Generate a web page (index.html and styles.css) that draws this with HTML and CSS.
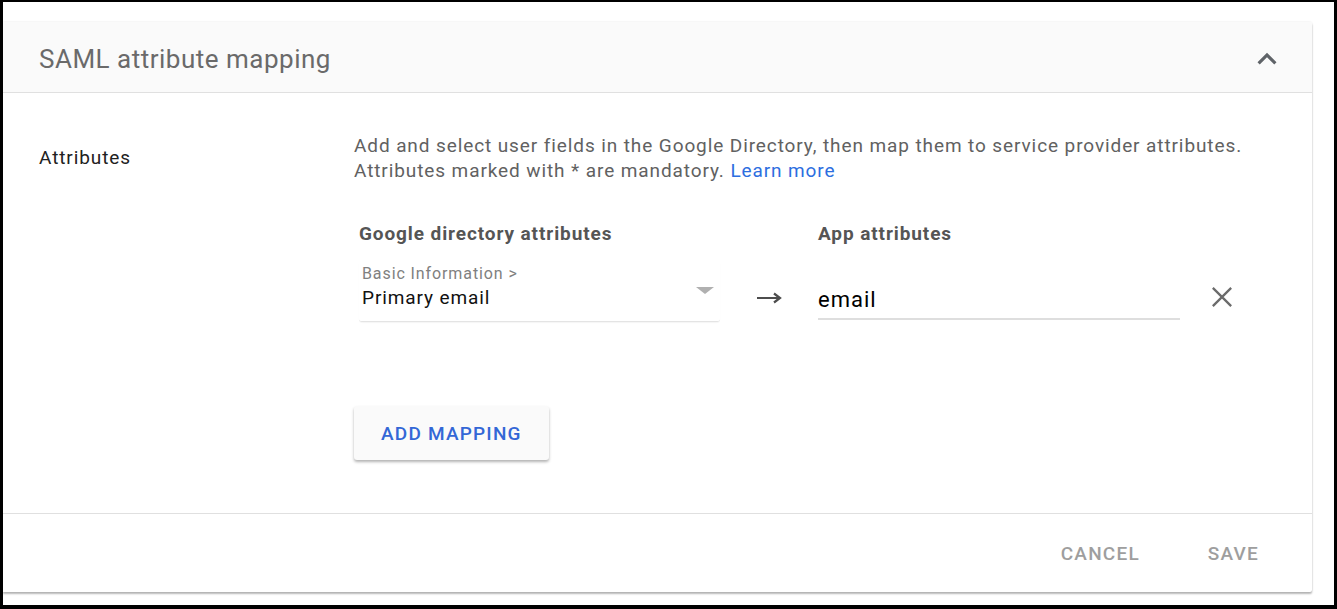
FILE: index.html
```html
<!DOCTYPE html>
<html lang="en">
<head>
  <meta charset="UTF-8" />
  <title>SAML attribute mapping</title>
  <link rel="stylesheet" href="styles.css">
</head>
<body>
  <div class="frame">
    <div class="card">
      <div class="card-header">
        <h2>SAML attribute mapping</h2>
        <svg class="chevron" width="38" height="38" viewBox="0 0 24 24">
          <path d="M7.41 15.41L12 10.83l4.59 4.58L18 14l-6-6-6 6z" fill="#5f6368"/>
        </svg>
      </div>

      <div class="card-body">
        <div class="label">Attributes</div>
        <div class="content">
          <p class="desc">
            Add and select user fields in the Google Directory, then map them to service provider attributes.<br>
            Attributes marked with * are mandatory. <a href="#">Learn more</a>
          </p>

          <div class="mapping">
            <div class="col-left">
              <div class="col-title">Google directory attributes</div>
              <div class="select">
                <div class="select-text">
                  <div class="crumb">Basic Information &gt;</div>
                  <div class="value">Primary email</div>
                </div>
                <span class="triangle"></span>
              </div>
            </div>

            <div class="arrow">
              <svg width="26" height="12" viewBox="0 0 26 12">
                <path d="M0 6h22M17 1.5L23 6l-6 4.5" stroke="#4d4d4d" stroke-width="2.2" fill="none"/>
              </svg>
            </div>

            <div class="col-right">
              <div class="col-title">App attributes</div>
              <div class="input">email</div>
            </div>

            <div class="remove">
              <svg width="22" height="22" viewBox="0 0 24 24">
                <path d="M2 2L22 22M22 2L2 22" stroke="#6b6b6b" stroke-width="2.5" fill="none"/>
              </svg>
            </div>
          </div>

          <button class="add-btn">ADD MAPPING</button>
        </div>
      </div>

      <div class="card-footer">
        <button class="flat">CANCEL</button>
        <button class="flat">SAVE</button>
      </div>
    </div>
  </div>
</body>
</html>
```

FILE: styles.css
```css
html, body {
  margin: 0;
  padding: 0;
}

body {
  font-family: Roboto, 'Liberation Sans', Arial, sans-serif;
  background: #000;
}

.frame {
  box-sizing: border-box;
  height: 609px;
  border-style: solid;
  border-color: #000;
  border-width: 2px 3px 4px 3px;
  background: #fff;
  padding: 20px 22px 0 0;
}

.card {
  background: #fff;
  border-radius: 0 2px 2px 0;
  box-shadow: 0 2px 2px rgba(0, 0, 0, 0.28), 0 0 2px rgba(0, 0, 0, 0.12);
}

.card-header {
  display: flex;
  align-items: center;
  justify-content: space-between;
  height: 71px;
  padding: 0 26px 0 36px;
  background: #fafafa;
  border-bottom: 1px solid #e0e0e0;
  box-sizing: border-box;
}

.card-header h2 {
  margin: 4px 0 0 0;
  font-size: 26px;
  font-weight: 400;
  letter-spacing: 0.5px;
  color: #6a6a6a;
}

.chevron {
  margin-top: 4px;
}

.card-body {
  display: flex;
  padding: 40px 0 53px 36px;
  border-bottom: 1px solid #e0e0e0;
}

.label {
  width: 315px;
  flex-shrink: 0;
  padding-top: 13px;
  font-size: 19px;
  letter-spacing: 0.9px;
  color: #212121;
}

.content {
  flex: 1;
}

.desc {
  margin: 0;
  font-size: 19px;
  letter-spacing: 0.9px;
  line-height: 25px;
  color: #616161;
}

.desc a {
  color: #2d6ee0;
  text-decoration: none;
}

.mapping {
  display: flex;
  align-items: flex-start;
  margin-top: 39px;
  padding-left: 5px;
}

.col-title {
  font-size: 19px;
  font-weight: 700;
  letter-spacing: 0.9px;
  color: #555;
  height: 30px;
}

.col-left {
  width: 361px;
}

.select {
  display: flex;
  justify-content: space-between;
  margin-top: 10px;
  padding: 0 6px 11px 3px;
  border-bottom: 1px solid #e4e4e4;
  border-radius: 0 0 3px 3px;
  box-shadow: 0 1px 1px rgba(0, 0, 0, 0.04);
}

.crumb {
  font-size: 16px;
  letter-spacing: 0.9px;
  color: #808080;
  line-height: 23px;
}

.value {
  font-size: 19px;
  letter-spacing: 0.9px;
  color: #111;
  line-height: 25px;
}

.triangle {
  align-self: flex-end;
  width: 0;
  height: 0;
  border-left: 9px solid transparent;
  border-right: 9px solid transparent;
  border-top: 7px solid #b0b0b0;
  margin-bottom: 16px;
}

.arrow {
  width: 98px;
  padding-top: 67px;
  padding-left: 37px;
  box-sizing: border-box;
}

.col-right {
  width: 362px;
}

.input {
  margin-top: 35px;
  padding-bottom: 6px;
  font-size: 22px;
  letter-spacing: 1px;
  color: #000;
  border-bottom: 2px solid #dedede;
}

.remove {
  padding: 64px 0 0 31px;
}

.add-btn {
  display: block;
  margin-top: 84px;
  padding: 0 27px;
  height: 54px;
  font-family: Roboto, 'Liberation Sans', Arial, sans-serif;
  font-size: 19px;
  font-weight: 500;
  letter-spacing: 1.2px;
  color: #3367d6;
  background: #fafafa;
  border: none;
  border-radius: 3px;
  box-shadow: 0 2px 3px rgba(0, 0, 0, 0.3);
  cursor: pointer;
}

.card-footer {
  display: flex;
  justify-content: flex-end;
  gap: 20px;
  height: 78px;
  align-items: center;
  padding-right: 29px;
}

.flat {
  font-family: Roboto, 'Liberation Sans', Arial, sans-serif;
  font-size: 19px;
  font-weight: 500;
  letter-spacing: 1.2px;
  color: #9e9e9e;
  background: none;
  border: none;
  padding: 8px 24px;
}
```
